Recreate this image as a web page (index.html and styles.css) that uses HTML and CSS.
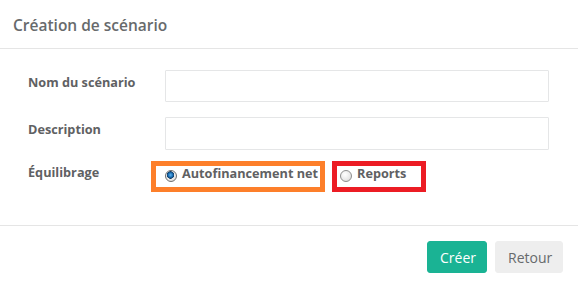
FILE: index.html
```html
<!DOCTYPE html>
<html lang="fr">
<head>
    <meta charset="UTF-8">
    <meta name="viewport" content="width=device-width, initial-scale=1.0">
    <title>Création de scénario</title>
    <link rel="stylesheet" href="styles.css">
</head>
<body>
    <div class="modal">
        <div class="modal-header">
            <h4 class="modal-title">Création de scénario</h4>
        </div>
        <form class="modal-body" id="scenarioForm">
            <div class="form-row">
                <label class="control-label" for="scenarioName">Nom du scénario</label>
                <input type="text" id="scenarioName" class="form-control">
            </div>
            <div class="form-row">
                <label class="control-label" for="scenarioDesc">Description</label>
                <input type="text" id="scenarioDesc" class="form-control tall">
            </div>
            <div class="form-row">
                <span class="control-label radio-title">Équilibrage</span>
                <div class="radio-group">
                    <label class="radio-option option-orange">
                        <input type="radio" name="equilibrage" value="autofinancement" checked>
                        <span>Autofinancement net</span>
                    </label>
                    <label class="radio-option option-red">
                        <input type="radio" name="equilibrage" value="reports">
                        <span>Reports</span>
                    </label>
                </div>
            </div>
        </form>
        <div class="modal-footer">
            <button type="button" class="btn btn-primary">Créer</button>
            <button type="button" class="btn btn-white">Retour</button>
        </div>
    </div>
</body>
</html>
```

FILE: styles.css
```css
body {
    font-family: "Open Sans", Arial, sans-serif;
    color: #676a6c;
    background-color: #fff;
    margin: 0;
    padding: 0;
}
.modal {
    width: 578px;
    height: 289px;
    background-color: #fff;
}
.modal-header {
    height: 48px;
    border-bottom: 1px solid #e5e5e5;
    padding: 0 13px;
    display: flex;
    align-items: center;
}
.modal-title {
    margin: 0;
    font-size: 15.5px;
    font-weight: 600;
    color: #676a6c;
    position: relative;
    top: 1px;
}
.modal-body {
    padding: 21px 29px 33px 28px;
    display: flex;
    flex-direction: column;
    gap: 15px;
}
.form-row {
    display: flex;
    align-items: flex-start;
}
.control-label {
    width: 137px;
    flex-shrink: 0;
    font-size: 12.7px;
    font-weight: 700;
    color: #5f6163;
    padding-top: 3px;
    line-height: 18px;
}
.radio-title {
    padding-top: 0;
    margin-top: -2px;
}
.form-control {
    flex: 1;
    height: 32px;
    box-sizing: border-box;
    border: 1px solid #e5e6e7;
    border-radius: 1px;
    padding: 6px 12px;
    font-family: inherit;
    font-size: 13px;
    margin: 0;
}
.form-control.tall {
    height: 33px;
}
.radio-group {
    display: flex;
    gap: 7px;
    margin-left: -14px;
    margin-top: -4px;
}
.radio-option {
    display: flex;
    align-items: flex-start;
    height: 21px;
    border: 5px solid;
    font-size: 12.7px;
    font-weight: 700;
    color: #5f6163;
    line-height: 12px;
}
.radio-option span {
    padding-top: 1px;
}
.option-orange {
    border-color: #fd7f2a;
    padding: 0 2px 0 9px;
}
.option-red {
    border-color: #ec1c24;
    padding: 0 15px 0 3px;
}
.radio-option input {
    appearance: none;
    width: 12px;
    height: 12px;
    margin: 4px 5px 0 0;
    border-radius: 50%;
    border: 1px solid #8d8d8d;
    background: radial-gradient(circle at 40% 35%, #fff 0%, #e8e8e8 60%, #c9c9c9 100%);
    box-sizing: border-box;
    flex-shrink: 0;
}
.radio-option input:checked {
    background:
        radial-gradient(circle at 45% 40%, #5fb3f0 0, #1a6fb5 2.2px, #123c66 3.5px, transparent 4px),
        radial-gradient(circle at 40% 35%, #fff 0%, #e8e8e8 60%, #c9c9c9 100%);
    border-color: #6f6f6f;
}
.modal-footer {
    border-top: 1px solid #e5e5e5;
    padding: 15px 15px 0;
    display: flex;
    justify-content: flex-end;
    gap: 8px;
}
.btn {
    height: 32px;
    border: 1px solid transparent;
    border-radius: 3px;
    font-family: inherit;
    font-size: 14px;
    padding: 0 12px;
    cursor: pointer;
}
.btn-primary {
    width: 60px;
    background-color: #1ab394;
    border-color: #1ab394;
    color: #fff;
}
.btn-white {
    width: 68px;
    background-color: #eeeeee;
    border-color: #eeeeee;
    color: #676a6c;
}
```
